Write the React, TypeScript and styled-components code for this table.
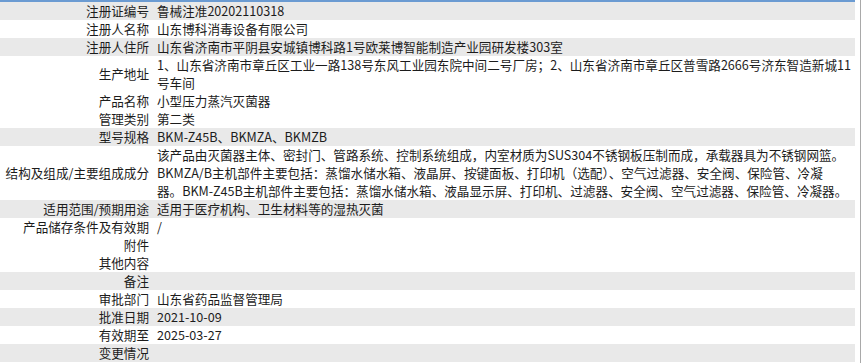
import styled, { createGlobalStyle } from 'styled-components'

const Global = createGlobalStyle`
    html, body { margin: 0; padding: 0; background: #fff; }
    body { font-family: "Noto Sans CJK SC", "Noto Sans", sans-serif; }
`

const Page = styled.div`
    width: 860px;
    height: 363px;
    border-right: 1px solid #a9a9a9;
`

const Table = styled.div`
    width: 855px;
    border-top: 2px solid #6b9bd2;
    font-size: 12.6px;
    line-height: 18px;
    color: #1c1c1c;
`

const Row = styled.div<{ $shade?: boolean }>`
    display: grid;
    grid-template-columns: 152px 1fr;
    background: ${p => (p.$shade ? '#e9e9e9' : '#fff')};
    min-height: 18px;
`

const Label = styled.div`
    display: flex;
    align-items: center;
    justify-content: flex-end;
    padding-right: 3px;
    white-space: nowrap;
`

const Value = styled.div`
    padding-left: 5px;
    white-space: nowrap;
`

type Item = { label: string; lines: string[]; shade?: boolean }

const rows: Item[] = [
    { label: '注册证编号', lines: ['鲁械注准20202110318'], shade: true },
    { label: '注册人名称', lines: ['山东博科消毒设备有限公司'] },
    { label: '注册人住所', lines: ['山东省济南市平阴县安城镇博科路1号欧莱博智能制造产业园研发楼303室'], shade: true },
    {
        label: '生产地址',
        lines: [
            '1、山东省济南市章丘区工业一路138号东风工业园东院中间二号厂房；2、山东省济南市章丘区普雪路2666号济东智造新城11',
            '号车间',
        ],
    },
    { label: '产品名称', lines: ['小型压力蒸汽灭菌器'] },
    { label: '管理类别', lines: ['第二类'] },
    { label: '型号规格', lines: ['BKM-Z45B、BKMZA、BKMZB'], shade: true },
    {
        label: '结构及组成/主要组成成分',
        lines: [
            '该产品由灭菌器主体、密封门、管路系统、控制系统组成，内室材质为SUS304不锈钢板压制而成，承载器具为不锈钢网篮。',
            'BKMZA/B主机部件主要包括：蒸馏水储水箱、液晶屏、按键面板、打印机（选配）、空气过滤器、安全阀、保险管、冷凝',
            '器。BKM-Z45B主机部件主要包括：蒸馏水储水箱、液晶显示屏、打印机、过滤器、安全阀、空气过滤器、保险管、冷凝器。',
        ],
    },
    { label: '适用范围/预期用途', lines: ['适用于医疗机构、卫生材料等的湿热灭菌'], shade: true },
    { label: '产品储存条件及有效期', lines: ['/'] },
    { label: '附件', lines: [''] },
    { label: '其他内容', lines: [''] },
    { label: '备注', lines: [''], shade: true },
    { label: '审批部门', lines: ['山东省药品监督管理局'] },
    { label: '批准日期', lines: ['2021-10-09'], shade: true },
    { label: '有效期至', lines: ['2025-03-27'] },
    { label: '变更情况', lines: [''], shade: true },
]

export default function App() {
    return (
        <Page>
            <Global />
            <Table>
                {rows.map((r, i) => (
                    <Row key={i} $shade={r.shade}>
                        <Label>{r.label}</Label>
                        <Value>
                            {r.lines.map((l, j) => (
                                <div key={j}>{l || '\u00a0'}</div>
                            ))}
                        </Value>
                    </Row>
                ))}
            </Table>
        </Page>
    )
}
